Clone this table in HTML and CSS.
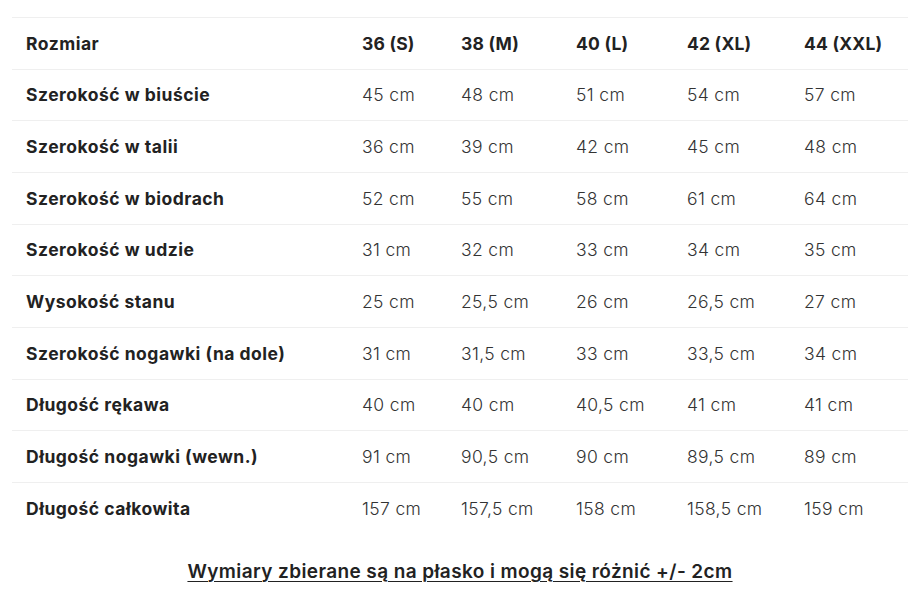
FILE: index.html
```html
<!DOCTYPE html>
<html lang="pl">
<head>
<meta charset="utf-8">
<title>Tabela rozmiarów</title>
<link rel="stylesheet" href="styles.css">
</head>
<body>
<div class="page">
  <div class="table">
    <div class="row head">
      <div class="label">Rozmiar</div><div>36 (S)</div><div>38 (M)</div><div>40 (L)</div><div>42 (XL)</div><div>44 (XXL)</div>
    </div>
    <div class="row">
      <div class="label">Szerokość w biuście</div><div>45 cm</div><div>48 cm</div><div>51 cm</div><div>54 cm</div><div>57 cm</div>
    </div>
    <div class="row">
      <div class="label">Szerokość w talii</div><div>36 cm</div><div>39 cm</div><div>42 cm</div><div>45 cm</div><div>48 cm</div>
    </div>
    <div class="row">
      <div class="label">Szerokość w biodrach</div><div>52 cm</div><div>55 cm</div><div>58 cm</div><div>61 cm</div><div>64 cm</div>
    </div>
    <div class="row">
      <div class="label">Szerokość w udzie</div><div>31 cm</div><div>32 cm</div><div>33 cm</div><div>34 cm</div><div>35 cm</div>
    </div>
    <div class="row">
      <div class="label">Wysokość stanu</div><div>25 cm</div><div>25,5 cm</div><div>26 cm</div><div>26,5 cm</div><div>27 cm</div>
    </div>
    <div class="row">
      <div class="label">Szerokość nogawki (na dole)</div><div>31 cm</div><div>31,5 cm</div><div>33 cm</div><div>33,5 cm</div><div>34 cm</div>
    </div>
    <div class="row">
      <div class="label">Długość rękawa</div><div>40 cm</div><div>40 cm</div><div>40,5 cm</div><div>41 cm</div><div>41 cm</div>
    </div>
    <div class="row">
      <div class="label">Długość nogawki (wewn.)</div><div>91 cm</div><div>90,5 cm</div><div>90 cm</div><div>89,5 cm</div><div>89 cm</div>
    </div>
    <div class="row">
      <div class="label">Długość całkowita</div><div>157 cm</div><div>157,5 cm</div><div>158 cm</div><div>158,5 cm</div><div>159 cm</div>
    </div>
  </div>
  <p class="note">Wymiary zbierane są na płasko i mogą się różnić +/- 2cm</p>
</div>
</body>
</html>
```
FILE: styles.css
```css
html, body {
  margin: 0;
  padding: 0;
  background: #ffffff;
}
body {
  font-family: Inter, "Open Sans", "DejaVu Sans", sans-serif;
  color: #222222;
  width: 922px;
  height: 608px;
  overflow: hidden;
}
.page {
  padding: 17px 14px 0 12px;
}
.table {
  display: flex;
  flex-direction: column;
  width: 896px;
}
.row {
  display: grid;
  grid-template-columns: 336px 99px 115px 111px 117px 118px;
  height: 51.67px;
  box-sizing: border-box;
  border-top: 1px solid #efefef;
  align-items: center;
  font-size: 17.5px;
  font-weight: 300;
  letter-spacing: 0.35px;
  color: #333333;
}
.row > div {
  padding-left: 14px;
  white-space: nowrap;
}
.row .label,
.row.head > div {
  font-weight: 700;
  letter-spacing: 0.5px;
  color: #222222;
}
.row.head > div:not(.label) {
  letter-spacing: 0.2px;
}
.note {
  margin: 26px 0 0;
  text-align: center;
  font-size: 19px;
  font-weight: 600;
  letter-spacing: 0.4px;
  color: #222222;
  text-decoration: underline;
  text-underline-offset: 3px;
  text-decoration-thickness: 1px;
}
```
